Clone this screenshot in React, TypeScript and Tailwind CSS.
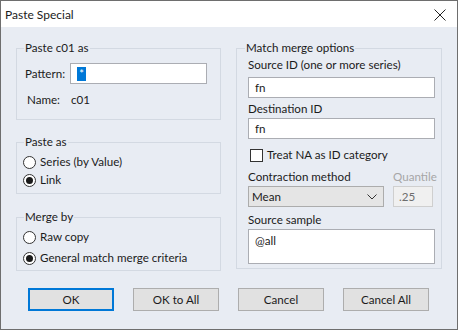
import React from "react";

const font = { fontFamily: "Lato, 'Liberation Sans', sans-serif" };

function Radio({ label, checked }: { label: string; checked?: boolean }) {
  return (
    <div className="flex h-[18px] items-center">
      <span className="ml-[-1px] flex h-[13px] w-[13px] items-center justify-center rounded-full border border-[#333333] bg-white">
        {checked && <span className="h-[7px] w-[7px] rounded-full bg-[#1a1a1a]" />}
      </span>
      <span className="ml-[4px]">{label}</span>
    </div>
  );
}

function Group({ title, className, children }: { title: string; className: string; children: React.ReactNode }) {
  return (
    <fieldset className={`border border-[#d3d9e2] px-[7px] ${className}`}>
      <legend className="px-[1px] leading-[16px]">{title}</legend>
      {children}
    </fieldset>
  );
}

export default function App() {
  return (
    <div
      style={font}
      className="flex h-[330px] w-[458px] flex-col border border-[#6e6e6e] bg-[#e8ecf3] text-[11.6px] leading-[16px] text-[#1b1b1b]"
    >
      <div className="flex h-[26px] shrink-0 items-center justify-between bg-white pl-[4px] pr-[11px] text-[12px]">
        <span className="pt-[1px]">Paste Special</span>
        <svg width="12" height="12" viewBox="0 0 12 12" className="mt-[1px]">
          <path d="M0.5 0.5 L11.5 11.5 M11.5 0.5 L0.5 11.5" stroke="#222" strokeWidth="1" />
        </svg>
      </div>

      <div className="flex gap-[15px] pl-[15px] pt-[13px]">
        {/* left column */}
        <div className="flex w-[205px] flex-col">
          <Group title="Paste c01 as" className="h-[80px]">
            <div className="mt-[7px] flex items-center">
              <span className="ml-[1px] w-[45px]">Pattern:</span>
              <div className="flex h-[21px] w-[137px] items-center border border-[#abadb3] bg-white pl-[6px]">
                <span className="flex h-[14px] w-[9px] items-start justify-center bg-[#0078d7] text-[11px] leading-[14px] text-white">
                  *
                </span>
              </div>
            </div>
            <div className="mt-[8px] flex">
              <span className="ml-[3px] w-[44px]">Name:</span>
              <span>c01</span>
            </div>
          </Group>

          <Group title="Paste as" className="mt-[14px] h-[60px]">
            <div className="mt-[3px]">
              <Radio label="Series (by Value)" />
              <Radio label="Link" checked />
            </div>
          </Group>

          <Group title="Merge by" className="mt-[15px] h-[62px]">
            <div className="mt-[3px] flex flex-col gap-[3px]">
              <Radio label="Raw copy" />
              <Radio label="General match merge criteria" checked />
            </div>
          </Group>
        </div>

        {/* right column */}
        <fieldset className="h-[229px] w-[206px] border border-[#d3d9e2] pl-[11px] pr-[4px]">
          <legend className="ml-[-3px] px-[1px] leading-[16px]">Match merge options</legend>
          <div className="mt-[1px]">Source ID (one or more series)</div>
          <div className="mt-[4px] flex h-[21px] w-[187px] items-center border border-[#abadb3] bg-white pl-[6px]">fn</div>
          <div className="mt-[3px]">Destination ID</div>
          <div className="mt-[1px] flex h-[21px] w-[187px] items-center border border-[#abadb3] bg-white pl-[6px]">fn</div>
          <div className="mt-[8px] flex items-center">
            <span className="ml-[2px] h-[13px] w-[13px] border border-[#333333] bg-white" />
            <span className="ml-[4px]">Treat NA as ID category</span>
          </div>
          <div className="mt-[6px] flex gap-[9px]">
            <div className="flex flex-col">
              <span>Contraction method</span>
              <div className="mt-[1px] flex h-[21px] w-[136px] items-center justify-between border border-[#acacac] bg-[#e5e5e5] pl-[3px] pr-[6px]">
                <span>Mean</span>
                <svg width="10" height="6" viewBox="0 0 10 6">
                  <path d="M0.5 0.5 L5 5 L9.5 0.5" fill="none" stroke="#333" strokeWidth="1" />
                </svg>
              </div>
            </div>
            <div className="flex flex-col">
              <span className="text-[#a6a6a6]">Quantile</span>
              <div className="mt-[1px] flex h-[21px] w-[40px] items-center border border-[#cfcfcf] bg-[#f0f0f0] pl-[5px] text-[#6d6d6d]">
                .25
              </div>
            </div>
          </div>
          <div className="mt-[5px]">Source sample</div>
          <div className="mt-[1px] h-[35px] w-[187px] border border-[#abadb3] bg-white pl-[6px] pt-[3px]">@all</div>
        </fieldset>
      </div>

      <div className="mt-[17px] flex gap-[19px] pl-[27px]">
        <button className="h-[23px] w-[86px] border-2 border-[#0078d7] bg-[#e1e1e1]">OK</button>
        <button className="h-[23px] w-[86px] border border-[#adadad] bg-[#e1e1e1]">OK to All</button>
        <button className="h-[23px] w-[86px] border border-[#adadad] bg-[#e1e1e1]">Cancel</button>
        <button className="h-[23px] w-[86px] border border-[#adadad] bg-[#e1e1e1]">Cancel All</button>
      </div>
    </div>
  );
}
